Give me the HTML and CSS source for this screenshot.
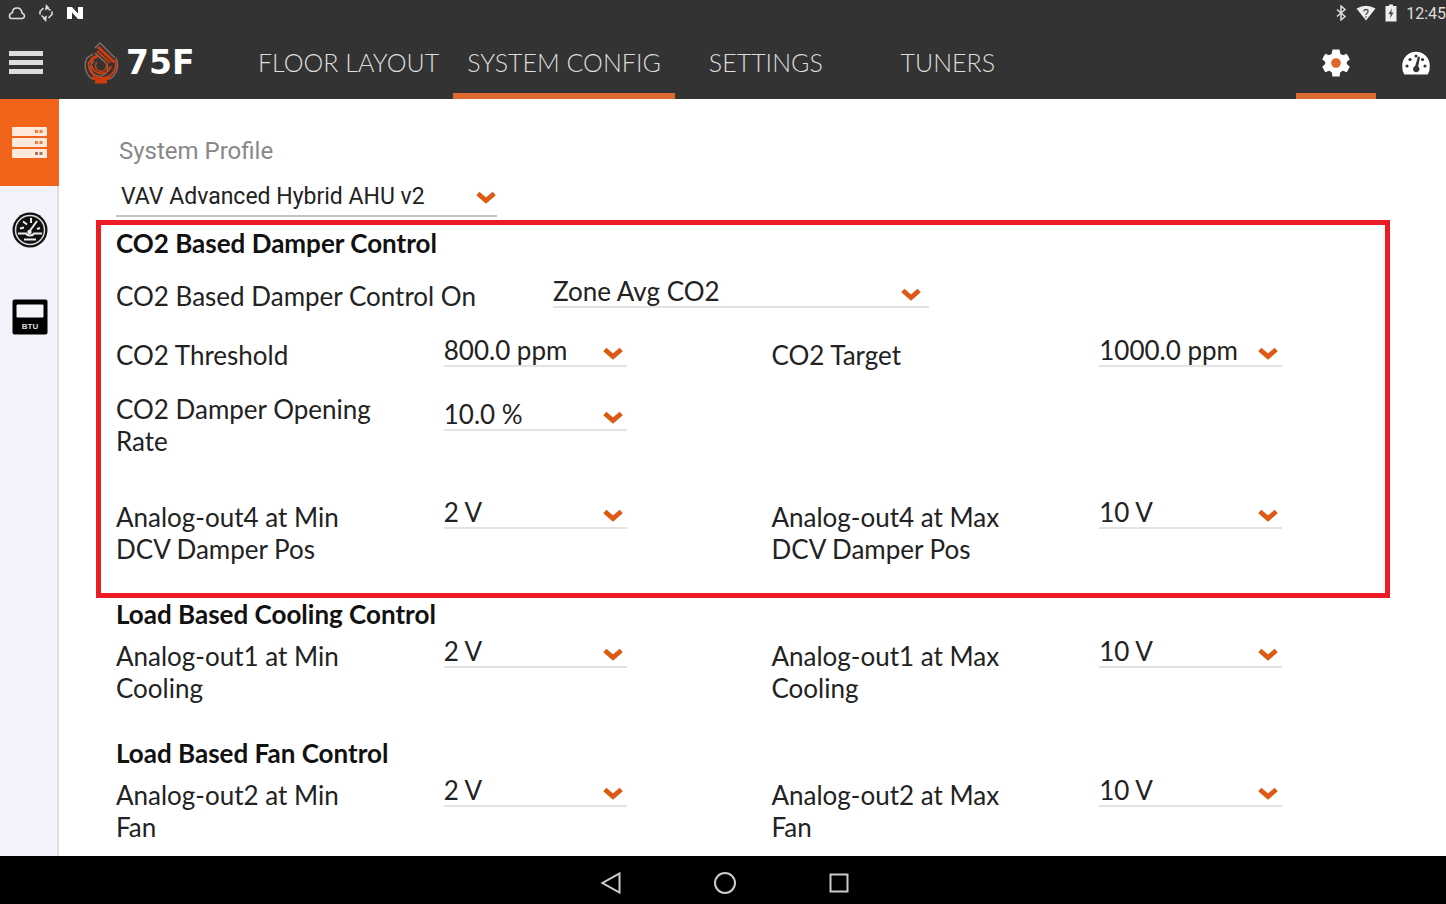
FILE: index.html
```
<!DOCTYPE html>
<html lang="en">
<head>
    <meta charset="UTF-8">
    <meta name="viewport" content="width=device-width, initial-scale=1.0">
    <title>75F - System Config</title>
    <link rel="stylesheet" href="styles.css">
</head>
<body>
    <svg class="defs" width="0" height="0" aria-hidden="true">
        <symbol id="chevron" viewBox="0 0 20 13">
            <path d="M1.800 2.500 L10 9.600 L18.200 2.500" fill="none" stroke="#dc5a14" stroke-width="4.800"/>
        </symbol>
    </svg>

    <div class="status-bar">
        <div class="status-left">
            <svg width="18" height="14" viewBox="0 0 18 14"><path d="M3.500 12.500h11q2-.5 2-2.500t-2.500-3Q13.500 2 9 2T4.500 6.500Q1.500 7.500 1.500 10t2 2.500z" fill="none" stroke="#ddd" stroke-width="1.600"/></svg>
            <svg width="16" height="18" viewBox="0 0 16 18"><path d="M2 10.500V7.500L5.500 4M14 7.500v3L10.500 14M9.500 4l3 2.500M6.500 14l-3-2.500" fill="none" stroke="#ddd" stroke-width="1.600"/><path d="M8 0l3.500 4L7 6.500zM8 18l-3.500-4L9 11.500z" fill="#ddd"/></svg>
            <svg width="18" height="14" viewBox="0 0 18 14"><path d="M1 13V1h5l6 6.500V1h5v12h-5L6 6.500V13z" fill="#fff"/></svg>
        </div>
        <div class="status-right">
            <svg width="12" height="16" viewBox="0 0 12 16"><path d="M2 4.500l8 7-4 3.500V1l4 3.500-8 7" fill="none" stroke="#ddd" stroke-width="1.500"/></svg>
            <svg width="20" height="16" viewBox="0 0 20 16"><path d="M0.500 3.500Q10-2 19.500 3.500L10 15.500z" fill="#eee"/><path d="M8 6.500q0-2 2-2t2 2q0 1-1 1.800T10 10M10 11.200v1.600" fill="none" stroke="#555" stroke-width="1.400"/></svg>
            <svg width="12" height="18" viewBox="0 0 12 18"><path d="M4 0.500h4v1.500h3.500v15.500H0.500V2H4z" fill="#eee"/><path d="M7 4.500l-3.500 5.500h2.200l-.7 4.500 3.500-6H6.300z" fill="#444"/></svg>
            <span class="clock">12:45</span>
        </div>
    </div>

    <header class="navbar">
        <button class="menu-btn" aria-label="Menu"><span></span><span></span><span></span></button>
        <a class="brand" href="#">
            <svg width="36" height="44" viewBox="0 0 36 44" fill="none">
                <g stroke="#8c7068" stroke-width="1.300">
                    <path d="M12 7L17 2L32 17"/>
                    <path d="M10 13L4 17A16.500 16.500 0 0 0 10 38.500M33 17A16.500 16.500 0 0 1 26 38.500"/>
                    <path d="M12 12L24 23A8.500 8.500 0 1 1 11 20"/>
                </g>
                <g stroke="#d03c0c">
                    <path d="M15 6L31 21" stroke-width="3"/>
                    <path d="M14 10L27 22" stroke-width="1.800"/>
                    <path d="M7 22Q9 16 15 15" stroke-width="3"/>
                    <path d="M6 21A13.500 13.500 0 1 0 32 19" stroke-width="2"/>
                    <path d="M9 25A9.800 9.800 0 0 0 28 25" stroke-width="2"/>
                    <path d="M14 21A5.500 5.500 0 1 0 22 21" stroke-width="1.500"/>
                    <path d="M9 36Q18 43 27 36" stroke-width="2.500"/>
                    <path d="M12 41h12" stroke-width="3"/>
                </g>
            </svg>
            <span>75F</span>
        </a>
        <nav class="tabs">
            <a href="#">FLOOR LAYOUT</a>
            <a href="#" class="active">SYSTEM CONFIG</a>
            <a href="#">SETTINGS</a>
            <a href="#">TUNERS</a>
        </nav>
        <div class="nav-icons">
            <button class="active" aria-label="Configuration">
                <svg width="28" height="28" viewBox="0 0 28 28"><path d="M10.500 0.500h7l.8 4.200 2.500 1.500 4-1.500 3 5.500-3 2.800v2l3 2.800-3 5.500-4-1.500-2.500 1.500-.8 4.200h-7l-.8-4.200-2.500-1.500-4 1.500-3-5.500 3-2.800v-2l-3-2.800 3-5.500 4 1.500 2.500-1.500z" fill="#fff"/><circle cx="14" cy="14" r="4.800" fill="#e0652a"/></svg>
            </button>
            <button aria-label="Dashboard">
                <svg width="28" height="24" viewBox="0 0 28 24"><path d="M2.500 23.500Q0 20 .3 14.500a13.700 13.700 0 0 1 27.400 0q.3 5.500-2.200 9z" fill="#fff"/><g fill="#333"><circle cx="5" cy="15" r="1.600"/><circle cx="8" cy="8.500" r="1.600"/><circle cx="14" cy="5" r="1.500"/><circle cx="20.500" cy="8.500" r="1.600"/><circle cx="23" cy="15" r="1.600"/><path d="M16 5.500l2 .5-1.800 9.500a3.200 3.200 0 1 1-3-.5z"/></g></svg>
            </button>
        </div>
    </header>

    <div class="layout">
        <aside class="sidebar">
            <button class="active" aria-label="System">
                <svg width="36" height="32" viewBox="0 0 36 32"><g fill="#ffe9dc"><rect width="35" height="9" rx="1"/><rect y="11" width="35" height="9" rx="1"/><rect y="22" width="35" height="9" rx="1"/></g><g fill="#ee7a3e"><path d="M23 3h3v3h-3zM27.500 3h3v3h-3zM23 14h3v3h-3zM27.500 14h3v3h-3z"/><path d="M23 25h3v3h-3zM27.500 25h3v3h-3z" fill="#a5745c"/></g></svg>
            </button>
            <button aria-label="Gauge">
                <svg width="36" height="36" viewBox="0 0 36 36"><circle cx="18" cy="18" r="17.500" fill="#111"/><circle cx="18" cy="18" r="14.500" fill="none" stroke="#ddd" stroke-width="1.500"/><g fill="none" stroke="#eee" stroke-width="2"><path d="M6 21.500h8q1 2 4 2t4-2h8M12 27.500h12"/><path d="M17 20l8-11M8 16.500l4-1M11 9.500l4 3M19 6v5M28 16l-3 1"/></g><circle cx="17.500" cy="20" r="2.200" fill="#eee"/></svg>
            </button>
            <button aria-label="BTU meter">
                <svg width="36" height="36" viewBox="0 0 36 36"><rect x="0.500" y="0.500" width="35" height="35" rx="2" fill="#000"/><rect x="4.500" y="5.500" width="27" height="13" rx="1" fill="#f4f4fb"/><text x="18" y="30" text-anchor="middle" class="btu">BTU</text></svg>
            </button>
        </aside>

        <main class="content">
            <div class="profile">
                <label for="profile">System Profile</label>
                <div class="select">
                    <select id="profile"><option>VAV Advanced Hybrid AHU v2</option></select>
                    <svg><use href="#chevron"/></svg>
                </div>
            </div>

            <section class="group highlighted">
                <h2>CO2 Based Damper Control</h2>
                <div class="row row-wide">
                    <label for="control-on">CO2 Based Damper Control On</label>
                    <div class="select">
                        <select id="control-on"><option>Zone Avg CO2</option></select>
                        <svg><use href="#chevron"/></svg>
                    </div>
                </div>
                <div class="row">
                    <label for="threshold">CO2 Threshold</label>
                    <div class="select">
                        <select id="threshold"><option>800.0 ppm</option></select>
                        <svg><use href="#chevron"/></svg>
                    </div>
                    <label for="target">CO2 Target</label>
                    <div class="select">
                        <select id="target"><option>1000.0 ppm</option></select>
                        <svg><use href="#chevron"/></svg>
                    </div>
                </div>
                <div class="row row-rate">
                    <label for="rate">CO2 Damper Opening Rate</label>
                    <div class="select">
                        <select id="rate"><option>10.0 %</option></select>
                        <svg><use href="#chevron"/></svg>
                    </div>
                </div>
                <div class="row">
                    <label for="out4-min">Analog-out4 at Min<br>DCV Damper Pos</label>
                    <div class="select">
                        <select id="out4-min"><option>2 V</option></select>
                        <svg><use href="#chevron"/></svg>
                    </div>
                    <label for="out4-max">Analog-out4 at Max<br>DCV Damper Pos</label>
                    <div class="select">
                        <select id="out4-max"><option>10 V</option></select>
                        <svg><use href="#chevron"/></svg>
                    </div>
                </div>
            </section>

            <section class="group">
                <h2>Load Based Cooling Control</h2>
                <div class="row">
                    <label for="out1-min">Analog-out1 at Min<br>Cooling</label>
                    <div class="select">
                        <select id="out1-min"><option>2 V</option></select>
                        <svg><use href="#chevron"/></svg>
                    </div>
                    <label for="out1-max">Analog-out1 at Max<br>Cooling</label>
                    <div class="select">
                        <select id="out1-max"><option>10 V</option></select>
                        <svg><use href="#chevron"/></svg>
                    </div>
                </div>
            </section>

            <section class="group">
                <h2>Load Based Fan Control</h2>
                <div class="row">
                    <label for="out2-min">Analog-out2 at Min<br>Fan</label>
                    <div class="select">
                        <select id="out2-min"><option>2 V</option></select>
                        <svg><use href="#chevron"/></svg>
                    </div>
                    <label for="out2-max">Analog-out2 at Max<br>Fan</label>
                    <div class="select">
                        <select id="out2-max"><option>10 V</option></select>
                        <svg><use href="#chevron"/></svg>
                    </div>
                </div>
            </section>
        </main>
    </div>

    <footer class="system-nav">
        <button aria-label="Back"><svg width="22" height="24" viewBox="0 0 22 24"><path d="M19.500 2.500v19L2.500 12z"/></svg></button>
        <button aria-label="Home"><svg width="24" height="24" viewBox="0 0 24 24"><circle cx="12" cy="12" r="10"/></svg></button>
        <button aria-label="Recents"><svg width="20" height="20" viewBox="0 0 20 20"><rect x="1.500" y="1.500" width="17" height="17"/></svg></button>
    </footer>
</body>
</html>
```
FILE: styles.css
```
* {
    box-sizing: border-box;
}
body {
    margin: 0;
    min-height: 100vh;
    display: flex;
    flex-direction: column;
    overflow-x: hidden;
    font-family: Lato, sans-serif;
    color: #222;
    background-color: #fff;
}
button {
    border: none;
    padding: 0;
    background: none;
    display: flex;
    justify-content: center;
    align-items: center;
    cursor: pointer;
}
.defs {
    position: absolute;
}

/* Status bar */
.status-bar {
    height: 26px;
    padding-left: 8px;
    display: flex;
    justify-content: space-between;
    background-color: #333;
}
.status-left,
.status-right {
    display: flex;
    align-items: center;
}
.status-left {
    gap: 12px;
}
.status-right {
    gap: 9px;
}
.clock {
    font-family: Roboto, sans-serif;
    font-size: 16px;
    color: #ddd;
}

/* Top navigation */
.navbar {
    height: 73px;
    display: flex;
    background-color: #333;
    overflow: hidden;
}
.menu-btn {
    width: 52px;
    flex-direction: column;
    gap: 4px;
}
.menu-btn span {
    width: 34px;
    height: 5px;
    background-color: #ddd;
}
.brand {
    width: 192px;
    padding-left: 31px;
    display: flex;
    align-items: center;
    gap: 7px;
    font-family: "DejaVu Sans", sans-serif;
    font-size: 33px;
    font-weight: bold;
    color: #fff;
    text-decoration: none;
}
.tabs {
    flex: 1;
    display: flex;
}
.tabs a {
    min-width: 182px;
    padding: 0 14px;
    border-bottom: 6px solid transparent;
    font-size: 25px;
    font-weight: 300;
    line-height: 72px;
    text-align: center;
    white-space: nowrap;
    color: #ddd;
    text-decoration: none;
}
.nav-icons {
    display: flex;
    margin-right: -10px;
}
.nav-icons button {
    width: 80px;
    padding-top: 6px;
    border-bottom: 6px solid transparent;
}
.tabs .active,
.nav-icons .active {
    border-color: #dc6a30;
}

/* Sidebar */
.layout {
    flex: 1;
    display: flex;
}
.sidebar {
    width: 59px;
    background-color: #f3f3fb;
    border-right: 2px solid #dcdce4;
}
.sidebar button {
    width: 59px;
    height: 87px;
}
.sidebar .active {
    background-color: #f26419;
}
.btu {
    font-family: "Liberation Sans", sans-serif;
    font-size: 8px;
    font-weight: bold;
    fill: #ddd;
}

/* Settings form */
.content {
    flex: 1;
    padding: 36px 19px 11px 57px;
}
.profile {
    width: 381px;
    margin-bottom: 3px;
    font-family: Roboto, sans-serif;
}
.profile label {
    display: block;
    padding-left: 3px;
    margin-bottom: 14px;
    font-size: 24px;
    line-height: 32px;
    color: #888;
}
.select {
    position: relative;
    width: 183px;
    height: 33px;
    border-bottom: 2px solid #e2e2e2;
}
.select select {
    display: block;
    width: 100%;
    height: 31px;
    padding: 0;
    border: none;
    appearance: none;
    background: none;
    font-family: inherit;
    font-size: 26px;
    color: #222;
}
.select svg {
    position: absolute;
    right: 4px;
    top: 13px;
    width: 20px;
    height: 13px;
    pointer-events: none;
}
.profile .select {
    width: 100%;
    height: 36px;
    border-color: #c4c4c4;
}
.profile select {
    padding-left: 5px;
    font-size: 23px;
}
.profile .select svg {
    right: 1px;
    top: 10px;
}
.group {
    padding-bottom: 33px;
}
.group:last-child {
    padding-bottom: 0;
}
.group h2 {
    margin: 0 0 5px;
    font-size: 26px;
    line-height: 32px;
    color: #111;
}
.row {
    display: grid;
    grid-template-columns: repeat(4, 1fr);
    margin-bottom: 22px;
}
.row:last-child {
    margin-bottom: 0;
}
.row label {
    padding: 5px 60px 0 0;
    font-size: 26px;
    line-height: 32px;
}
.row-wide {
    grid-template-columns: 1fr 2fr;
}
.row-wide label {
    padding-right: 0;
    white-space: nowrap;
}
.row-wide .select {
    width: 376px;
}
.row-wide .select svg {
    right: 8px;
}
.row-rate {
    margin-bottom: 39px;
}
.row-rate label {
    padding-top: 0;
}
.row-rate .select {
    margin-top: 5px;
}
.highlighted {
    position: relative;
    padding-top: 7px;
}
.highlighted h2 {
    margin-bottom: 16px;
}
.highlighted::after {
    content: "";
    position: absolute;
    top: 0;
    bottom: 0;
    left: -20px;
    right: 37px;
    border: 5px solid #ed1c24;
    pointer-events: none;
}

/* Bottom bar */
.system-nav {
    height: 48px;
    display: flex;
    justify-content: center;
    align-items: center;
    background-color: #000;
    padding: 6px 0 0 4px;
}
.system-nav button {
    width: 114px;
}
.system-nav svg {
    fill: none;
    stroke: #ccc;
    stroke-width: 2px;
}
```
